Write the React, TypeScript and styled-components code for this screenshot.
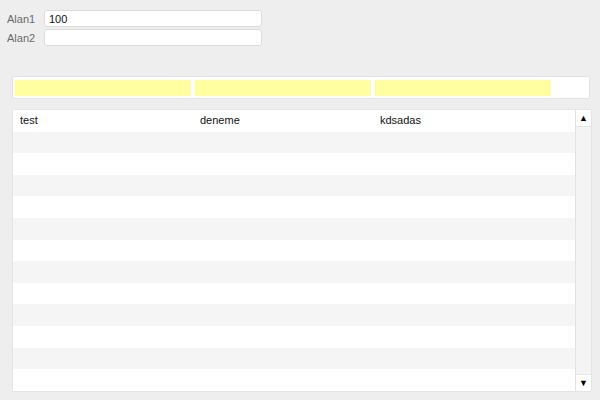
import { FC } from "react";
import styled, { createGlobalStyle } from "styled-components";

const GlobalStyle = createGlobalStyle`
  html, body {
    margin: 0;
    padding: 0;
    background: #eeeeee;
    font-family: "Liberation Sans", Arial, sans-serif;
    font-size: 11px;
  }
`;

const Page = styled.div`
  width: 600px;
  height: 400px;
  padding: 10px 9px 0 12px;
  box-sizing: border-box;
  display: flex;
  flex-direction: column;
`;

const Form = styled.div`
  display: grid;
  grid-template-columns: 37px 218px;
  grid-auto-rows: 17px;
  row-gap: 2px;
  align-items: center;
  margin-left: -5px;
`;

const Label = styled.label`
  color: #6a6a6a;
  font-size: 11px;
`;

const Input = styled.input`
  height: 17px;
  box-sizing: border-box;
  border: 1px solid #dcdcdc;
  border-radius: 3px;
  background: #fff;
  padding: 0 4px;
  font-family: inherit;
  font-size: 11px;
  color: #111;
  outline: none;
`;

const CellBar = styled.div`
  margin-top: 30px;
  width: 578px;
  height: 23px;
  box-sizing: border-box;
  background: #fff;
  border: 1px solid #e2e2e2;
  border-radius: 2px;
  padding: 3px 2px;
  display: flex;
  gap: 4px;
`;

const Cell = styled.div`
  width: 176px;
  height: 16px;
  background: #ffffa2;
`;

const Table = styled.div`
  margin-top: 10px;
  width: 580px;
  height: 283px;
  box-sizing: border-box;
  background: #fff;
  border: 1px solid #e4e4e4;
  border-radius: 2px;
  display: flex;
  overflow: hidden;
`;

const Rows = styled.div`
  flex: 1;
  display: flex;
  flex-direction: column;
`;

const Row = styled.div<{ $odd: boolean }>`
  height: 21.6px;
  flex: none;
  display: flex;
  align-items: center;
  padding-bottom: 2px;
  box-sizing: border-box;
  background: ${(p) => (p.$odd ? "#f5f5f5" : "#ffffff")};
`;

const Col = styled.div`
  width: 180px;
  padding-left: 7px;
  box-sizing: border-box;
  color: #111;
  font-size: 11px;
`;

const Scrollbar = styled.div`
  width: 15px;
  display: flex;
  flex-direction: column;
  background: #f4f4f4;
  border-left: 1px solid #e2e2e2;
`;

const Arrow = styled.div`
  height: 16px;
  background: #fff;
  display: flex;
  align-items: center;
  justify-content: center;
  font-size: 9px;
  color: #000;
`;

const Track = styled.div`
  flex: 1;
  border-top: 1px solid #e6e6e6;
  border-bottom: 1px solid #e6e6e6;
`;

const App: FC = () => {
  const rows = Array.from({ length: 13 }, (_, i) => i);
  return (
    <>
      <GlobalStyle />
      <Page>
        <Form>
          <Label>Alan1</Label>
          <Input defaultValue="100" />
          <Label>Alan2</Label>
          <Input defaultValue="" />
        </Form>
        <CellBar>
          <Cell />
          <Cell />
          <Cell />
        </CellBar>
        <Table>
          <Rows>
            {rows.map((i) => (
              <Row key={i} $odd={i % 2 === 1}>
                {i === 0 && (
                  <>
                    <Col>test</Col>
                    <Col>deneme</Col>
                    <Col>kdsadas</Col>
                  </>
                )}
              </Row>
            ))}
          </Rows>
          <Scrollbar>
            <Arrow>▲</Arrow>
            <Track />
            <Arrow>▼</Arrow>
          </Scrollbar>
        </Table>
      </Page>
    </>
  );
};

export default App;
